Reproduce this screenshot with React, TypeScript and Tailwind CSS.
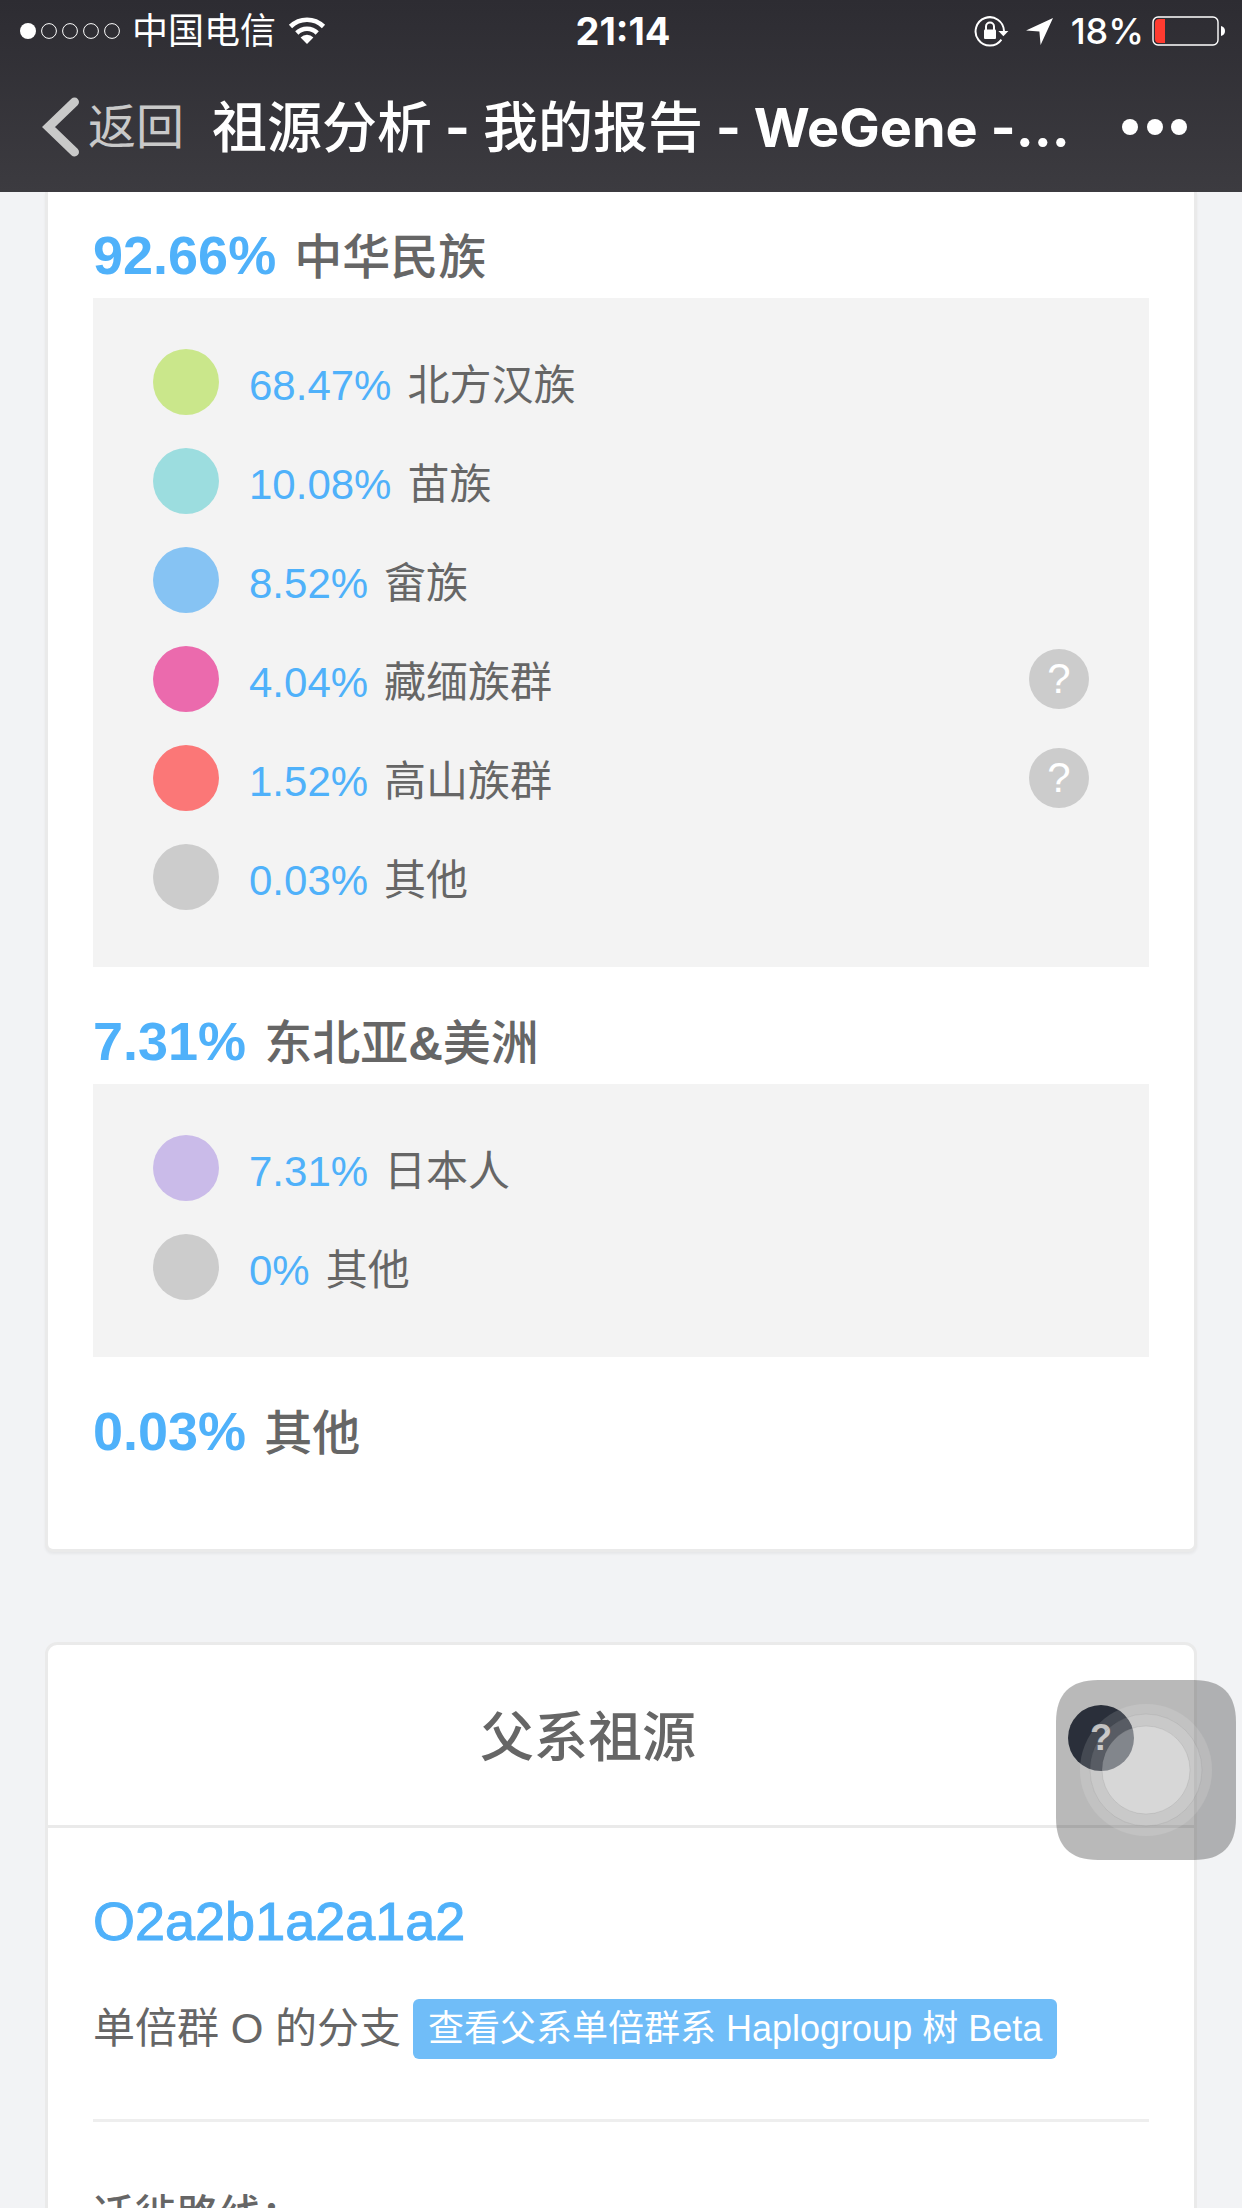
type Ancestry = {
  percent: string;
  name: string;
  dot: string;
  help?: boolean;
};

const chinese: Ancestry[] = [
  { percent: "68.47%", name: "北方汉族", dot: "bg-[#cae78b]" },
  { percent: "10.08%", name: "苗族", dot: "bg-[#9cdddf]" },
  { percent: "8.52%", name: "畲族", dot: "bg-[#86c3f3]" },
  { percent: "4.04%", name: "藏缅族群", dot: "bg-[#eb6aad]", help: true },
  { percent: "1.52%", name: "高山族群", dot: "bg-[#fb7777]", help: true },
  { percent: "0.03%", name: "其他", dot: "bg-[#cccccc]" },
];

const northeast: Ancestry[] = [
  { percent: "7.31%", name: "日本人", dot: "bg-[#cabbe9]" },
  { percent: "0%", name: "其他", dot: "bg-[#cccccc]" },
];

function StatusBar() {
  return (
    <div className="grid h-[62px] grid-cols-3 items-center pr-4 pl-5 text-[36px] leading-[60px]">
      <div className="flex items-center gap-3">
        <svg width="100" height="16" viewBox="0 0 100 16" fill="none" stroke="white">
          <circle cx="8" cy="8" r="8" fill="white" stroke="none" />
          <circle cx="29" cy="8" r="7.4" />
          <circle cx="50" cy="8" r="7.4" />
          <circle cx="71" cy="8" r="7.4" />
          <circle cx="92" cy="8" r="7.4" />
        </svg>
        <span className="whitespace-nowrap">中国电信</span>
        <svg width="38" height="28" viewBox="0 0 38 28">
          <path d="M2.5 9.5a23.5 23.5 0 0 1 33 0" fill="none" stroke="white" strokeWidth="4.6" />
          <path d="M8.8 16a14.5 14.5 0 0 1 20.4 0" fill="none" stroke="white" strokeWidth="4.6" />
          <path d="M12.6 20.4a9.2 9.2 0 0 1 12.8 0L19 27z" fill="white" />
        </svg>
      </div>
      <time className="text-center text-[38px] font-bold">21:14</time>
      <div className="flex items-center justify-end">
        {/* rotation lock */}
        <svg width="36" height="32" viewBox="0 0 36 32" fill="none">
          <path d="M27.4 24.6a14.2 14.2 0 1 1 2.6-8.6" stroke="white" strokeWidth="2" />
          <path d="M24.4 16h10l-5 5.2z" fill="white" />
          <rect x="10" y="14.4" width="12" height="9.6" rx="1" fill="white" />
          <path d="M12 15v-3.4a4 4 0 0 1 8 0V15" stroke="white" strokeWidth="2" />
        </svg>
        <svg width="27" height="27" viewBox="0 0 27 27" className="ml-4">
          <path d="M27 0 14.6 27 13.4 13.4 0 12.4z" fill="white" />
        </svg>
        <span className="ml-[18px] font-medium">18%</span>
        <svg width="74" height="30" viewBox="0 0 74 30" className="ml-2">
          <rect x="1" y="1" width="65" height="28" rx="5" fill="none" stroke="white" strokeWidth="1.4" />
          <path d="M7 3h6v24H7a4 4 0 0 1-4-4V7a4 4 0 0 1 4-4z" fill="#ff3b30" />
          <path d="M69 10q4 1 4 5t-4 5z" fill="white" />
        </svg>
      </div>
    </div>
  );
}

function NavBar() {
  return (
    <nav className="flex h-[130px] items-center pr-[54px] pl-[42px]">
      <button type="button" className="flex shrink-0 items-center gap-2 text-[48px] leading-[60px] text-[#c9c9c9]">
        <svg width="38" height="60" viewBox="0 0 38 60" fill="none">
          <path d="M32.5 5 6.5 30l26 25" stroke="#c9c9c9" strokeWidth="9" strokeLinecap="round" />
        </svg>
        返回
      </button>
      <h1 className="ml-[28px] flex-1 text-[54px] leading-[72px] font-bold whitespace-nowrap">
        <span className="text-[55px] font-medium">祖源分析</span> -{" "}
        <span className="text-[55px] font-medium">我的报告</span> - WeGene -...
      </h1>
      <button type="button" aria-label="更多" className="shrink-0">
        <svg width="66" height="16" viewBox="0 0 66 16" fill="white">
          <circle cx="8" cy="8" r="8" />
          <circle cx="33" cy="8" r="8" />
          <circle cx="57" cy="8" r="8" />
        </svg>
      </button>
    </nav>
  );
}

function GroupHeading({ percent, children }: { percent: string; children: React.ReactNode }) {
  return (
    <h2 className="flex h-[60px] items-baseline gap-[18px] text-[48px] leading-[60px] font-medium">
      <span className="text-[54px] font-bold text-[#4fb1fa]">{percent}</span>
      <span>{children}</span>
    </h2>
  );
}

function AncestryList({ items }: { items: Ancestry[] }) {
  return (
    <ul className="mt-[13px] mb-11 flex flex-col gap-[33px] bg-[#f3f3f3] px-[60px] pt-[51px] pb-[57px]">
      {items.map((item) => (
        <li key={item.name} className="flex h-[66px] items-center">
          <span className={`h-[66px] w-[66px] shrink-0 rounded-full ${item.dot}`} />
          <span className="ml-[30px] flex flex-1 gap-4 pt-2 text-[42px] leading-[60px]">
            <span className="text-[#4fb1fa]">{item.percent}</span>
            <span>{item.name}</span>
          </span>
          {item.help && (
            <button
              type="button"
              aria-label={`${item.name}说明`}
              className="h-[60px] w-[60px] rounded-full bg-[#cccccc] text-[42px] leading-[60px] text-white"
            >
              ?
            </button>
          )}
        </li>
      ))}
    </ul>
  );
}

function AssistiveTouch() {
  return (
    <div className="pointer-events-none fixed top-[1680px] right-[6px] h-[180px] w-[180px]">
      <svg viewBox="0 0 180 180" className="h-full w-full">
        <path
          d="M42 0h96c28 0 42 14 42 42v96c0 28-14 42-42 42H42c-28 0-42-14-42-42V42C0 14 14 0 42 0z"
          fill="black"
          fillOpacity="0.275"
        />
        <circle cx="90" cy="90" r="66" fill="white" fillOpacity="0.12" />
        <circle cx="90" cy="90" r="56" fill="white" fillOpacity="0.11" stroke="black" strokeOpacity="0.06" />
        <circle cx="90" cy="90" r="44" fill="white" fillOpacity="0.26" stroke="black" strokeOpacity="0.07" />
      </svg>
    </div>
  );
}

export default function App() {
  return (
    <div className="flex h-screen flex-col overflow-hidden bg-[#f2f3f5] font-['Liberation_Sans','Noto_Sans_CJK_SC',sans-serif] text-[#666666]">
      <header className="shrink-0 bg-gradient-to-b from-[#2d2c32] to-[#3c3b40] font-['Inter','Noto_Sans_CJK_SC',sans-serif] text-white">
        <StatusBar />
        <NavBar />
      </header>

      <main className="min-h-0 flex-1 overflow-hidden px-[45px]">
        <section className="rounded-b-lg border-[3px] border-t-0 border-[#eaeaea] bg-white px-[45px] pt-[33px] pb-[88px] shadow-[0_2px_3px_rgba(0,0,0,0.05)]">
          <GroupHeading percent="92.66%">中华民族</GroupHeading>
          <AncestryList items={chinese} />
          <GroupHeading percent="7.31%">
            东北亚<span className="font-bold">&amp;</span>美洲
          </GroupHeading>
          <AncestryList items={northeast} />
          <GroupHeading percent="0.03%">其他</GroupHeading>
        </section>

        <section className="mt-[90px] rounded-xl border-[3px] border-[#eaeaea] bg-white">
          <div className="flex h-[183px] items-center border-b-[3px] border-[#eaeaea] px-[60px] pt-[6px]">
            <h2 className="flex-1 text-center text-[54px] leading-[72px] font-medium">父系祖源</h2>
            <button
              type="button"
              aria-label="父系祖源说明"
              className="h-[66px] w-[66px] rounded-full bg-[#3a4250] text-[36px] leading-[66px] font-bold text-white"
            >
              ?
            </button>
          </div>

          <div className="px-[45px] pt-[63px] pb-[120px]">
            <h3 className="text-[54px] leading-[60px] text-[#4fb1fa] [-webkit-text-stroke:1px_currentColor]">
              O2a2b1a2a1a2
            </h3>
            <div className="mt-12 flex items-center gap-3 border-b-[3px] border-[#eeeeee] pb-[60px] text-[42px] leading-[60px]">
              <span className="whitespace-nowrap">单倍群 O 的分支</span>
              <a href="#tree" className="rounded-md bg-[#70bdf8] px-[15px] text-[36px] leading-[60px] whitespace-nowrap text-white">
                查看父系单倍群系 Haplogroup 树 Beta
              </a>
            </div>
            <h4 className="mt-[64px] text-[42px] leading-[60px] font-medium">迁徙路线：</h4>
          </div>
        </section>
      </main>

      <AssistiveTouch />
    </div>
  );
}
